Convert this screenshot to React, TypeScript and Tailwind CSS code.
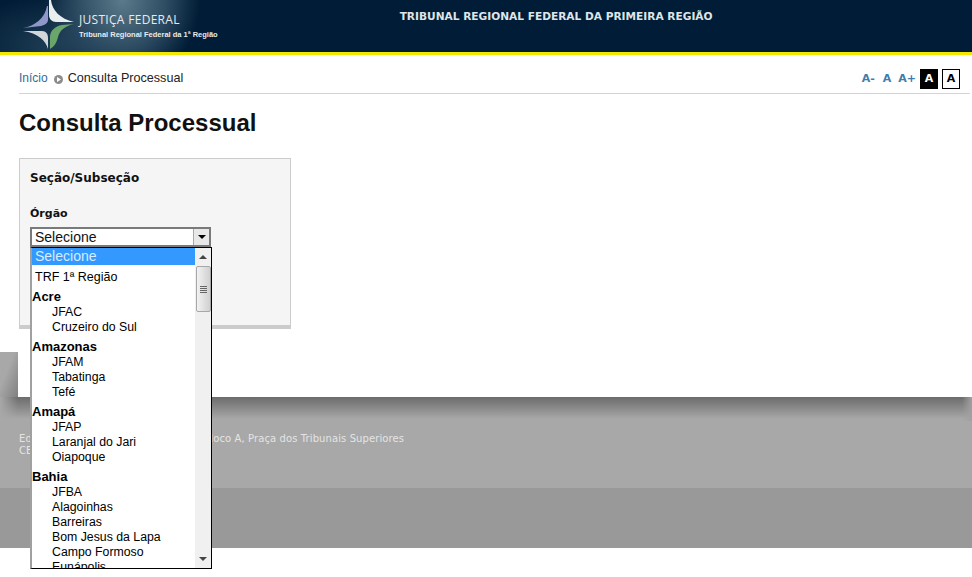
const groups = [
  { name: "Acre", items: ["JFAC", "Cruzeiro do Sul"] },
  { name: "Amazonas", items: ["JFAM", "Tabatinga", "Tefé"] },
  { name: "Amapá", items: ["JFAP", "Laranjal do Jari", "Oiapoque"] },
  { name: "Bahia", items: ["JFBA", "Alagoinhas", "Barreiras", "Bom Jesus da Lapa", "Campo Formoso", "Eunápolis"] },
];

function Logo() {
  return (
    <svg width="56" height="52" viewBox="20 0 56 52" className="shrink-0">
      <path d="M49 0 L51 0 C52 10 60 19 74 22 L56 22 C52 22 49 19 49 15 Z" fill="#e8eef0" />
      <path d="M47 6 L48 6 L48 20 C48 23 45 25 41 26 L23 28 C35 26 45 18 47 6 Z" fill="#8f96c8" />
      <path d="M23 31 L42 31 C46 31 48 34 48 38 L48 49 C46 41 38 33 23 31 Z" fill="#d3d6d8" />
      <path d="M74 24 L62 25 C55 26 50 31 50 37 L50 49 C54 47 57 42 58 37 C60 30 65 26 74 24 Z" fill="#6aa56c" />
    </svg>
  );
}

function Scrollbar() {
  return (
    <div className="w-[16px] shrink-0 bg-[#f0f0f0] flex flex-col items-center">
      <div className="h-[18px] flex items-center justify-center">
        <div className="w-0 h-0 border-l-[4px] border-r-[4px] border-b-[4px] border-l-transparent border-r-transparent border-b-[#444]" />
      </div>
      <div className="w-[15px] h-[46px] rounded-[2px] border border-[#a8a8a8] bg-gradient-to-r from-[#f2f2f2] to-[#d0d0d0] flex flex-col gap-[1px] items-center justify-center">
        <div className="w-[7px] h-[1px] bg-[#666]" />
        <div className="w-[7px] h-[1px] bg-[#666]" />
        <div className="w-[7px] h-[1px] bg-[#666]" />
        <div className="w-[7px] h-[1px] bg-[#666]" />
      </div>
      <div className="flex-1" />
      <div className="h-[18px] flex items-center justify-center">
        <div className="w-0 h-0 border-l-[4px] border-r-[4px] border-t-[4px] border-l-transparent border-r-transparent border-t-[#444]" />
      </div>
    </div>
  );
}

function Dropdown() {
  return (
    <div className="absolute left-0 top-[20px] z-10 w-[182px] h-[322px] flex overflow-hidden bg-white border-t border-r border-b border-t-black border-r-black border-b-black border-l-2 border-l-[#a0a0a0] font-['Liberation_Sans',sans-serif] text-[12.3px] text-black">
      <div className="flex-1 min-w-0">
        <div className="h-[17px] pl-[3px] bg-[#3399ff] text-[#d8ecff] text-[14px] leading-[17px]">Selecione</div>
        <div className="h-[24px] pl-[3px] text-[12.5px] leading-[25px]">TRF 1ª Região</div>
        {groups.map((group) => (
          <div key={group.name} className="pb-[5px]">
            <div className="h-[15px] font-bold text-[13px] leading-[15px]">{group.name}</div>
            {group.items.map((item) => (
              <div key={item} className="h-[15px] pl-[20px] leading-[17px]">{item}</div>
            ))}
          </div>
        ))}
      </div>
      <Scrollbar />
    </div>
  );
}

export default function App() {
  return (
    <div className="min-h-[577px] bg-white flex flex-col font-['Liberation_Sans',sans-serif]">
      <header className="h-[55px] border-b-[3px] border-b-[#f2e800] bg-[#001c36] bg-[radial-gradient(ellipse_78px_85px_at_122px_0px,#5b7a8a_0%,#2f4e64_55%,transparent_100%),radial-gradient(ellipse_95px_50px_at_55px_45px,#1f3d55_0%,transparent_100%)] flex">
        <div className="ml-[20px] flex">
          <Logo />
          <div className="ml-[3px] pt-[12px] text-[#e6ebee]">
            <div className="font-['Open_Sans',sans-serif] text-[12px] leading-[15px] tracking-[0.3px]">JUSTIÇA FEDERAL</div>
            <div className="mt-[2px] font-['Liberation_Sans',sans-serif] font-bold text-[7.5px] leading-[12px] whitespace-nowrap">Tribunal Regional Federal da 1ª Região</div>
          </div>
        </div>
        <div className="ml-[182px] pt-[9px] font-['DejaVu_Sans',sans-serif] font-bold text-[10.6px] leading-[14px] text-[#dfe5ea] whitespace-nowrap">
          TRIBUNAL REGIONAL FEDERAL DA PRIMEIRA REGIÃO
        </div>
      </header>

      <main className="relative h-[342px] px-[19px] pt-[14px]">
        <div className="h-[25px] mr-[-17px] border-b border-b-[#d4d4d4] flex items-start pr-[10px] text-[12px] leading-[18px]">
          <span className="text-[#336b94]">Início</span>
          <svg width="9" height="9" viewBox="0 0 9 9" className="ml-[6px] mt-[6px]">
            <circle cx="4.5" cy="4.5" r="4.5" fill="#8c8c8c" />
            <path d="M3 2 L7 4.5 L3 7 Z" fill="#fff" />
          </svg>
          <span className="ml-[5px] text-[12.6px] text-[#222]">Consulta Processual</span>
          <div className="ml-auto flex items-start font-['DejaVu_Sans',sans-serif] font-bold text-[11px] text-[#3f7cac]">
            <span className="mt-[1px]">A-</span>
            <span className="mt-[1px] ml-[8px]">A</span>
            <span className="mt-[1px] ml-[7px]">A+</span>
            <span className="ml-[4px] w-[18px] h-[20px] bg-black text-white flex items-center justify-center">A</span>
            <span className="ml-[4px] w-[18px] h-[20px] bg-white text-black border border-black flex items-center justify-center">A</span>
          </div>
        </div>

        <h1 className="mt-[13px] font-bold text-[24px] leading-[32px] text-[#111]">Consulta Processual</h1>

        <section className="mt-[19px] w-[272px] h-[171px] bg-[#f5f5f5] border border-[#cccccc] border-b-[4px] px-[10px] pt-[11px] font-['DejaVu_Sans',sans-serif] text-[#111]">
          <div className="font-bold text-[12px] leading-[16px]">Seção/Subseção</div>
          <div className="mt-[20px] font-bold text-[11px] leading-[16px]">Órgão</div>
          <div className="relative mt-[5px] w-[181px]">
            <div className="h-[20px] border-2 border-[#7a7a7a] bg-white flex font-['Liberation_Sans',sans-serif] text-[14px] leading-[17px]">
              <span className="flex-1 pl-[3px]">Selecione</span>
              <div className="w-[16px] bg-[#e8e8e8] border-l border-l-[#aaa] flex items-center justify-center">
                <div className="w-0 h-0 border-l-[4px] border-r-[4px] border-t-[4px] border-l-transparent border-r-transparent border-t-black" />
              </div>
            </div>
            <Dropdown />
          </div>
        </section>

        <div className="absolute left-0 bottom-0 w-[18px] h-[45px] bg-gradient-to-br from-[#a8a8a8] from-[40%] to-[#808080]" />
      </main>

      <footer className="relative bg-[#a8a8a8]">
        <div className="absolute left-0 top-0 w-[18px] h-[24px] bg-gradient-to-r from-[#a8a8a8] to-transparent" />
        <div className="absolute right-0 top-0 w-[10px] h-[24px] bg-gradient-to-l from-[#a0a0a0] to-transparent" />
        <div className="h-[91px] bg-gradient-to-b from-[#6c6c6c] to-[#a8a8a8] to-[24%] px-[19px] pt-[36px] font-['DejaVu_Sans',sans-serif] text-[10px] leading-[12px] text-[#e4e4e4] tracking-[0.1px]">
          <div>Edifício Sede I, SAS Sul, Quadra 02, Bloco A, Praça dos Tribunais Superiores</div>
          <div>CEP 70070-900 Brasília/DF</div>
        </div>
        <div className="h-[60px] bg-[#999999]" />
      </footer>
    </div>
  );
}
